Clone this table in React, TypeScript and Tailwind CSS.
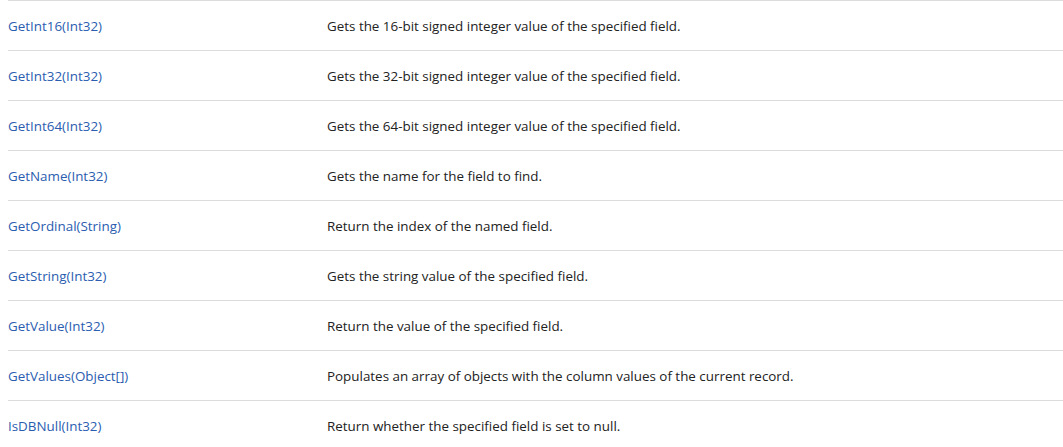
const rows: [string, string][] = [
  ['GetInt16(Int32)', 'Gets the 16-bit signed integer value of the specified field.'],
  ['GetInt32(Int32)', 'Gets the 32-bit signed integer value of the specified field.'],
  ['GetInt64(Int32)', 'Gets the 64-bit signed integer value of the specified field.'],
  ['GetName(Int32)', 'Gets the name for the field to find.'],
  ['GetOrdinal(String)', 'Return the index of the named field.'],
  ['GetString(Int32)', 'Gets the string value of the specified field.'],
  ['GetValue(Int32)', 'Return the value of the specified field.'],
  ['GetValues(Object[])', 'Populates an array of objects with the column values of the current record.'],
  ['IsDBNull(Int32)', 'Return whether the specified field is set to null.'],
]

export default function App() {
  return (
    <div className="min-h-screen bg-white pl-2 font-['Open_Sans',sans-serif] text-[13.4px]">
      {rows.map(([name, desc]) => (
        <div key={name} className="flex h-[50px] items-center border-t border-[#dcdcdc] pt-px">
          <a href="#" className="w-[319px] shrink-0 text-[#2a5db0]">
            {name}
          </a>
          <span className="text-[#222]">{desc}</span>
        </div>
      ))}
    </div>
  )
}
